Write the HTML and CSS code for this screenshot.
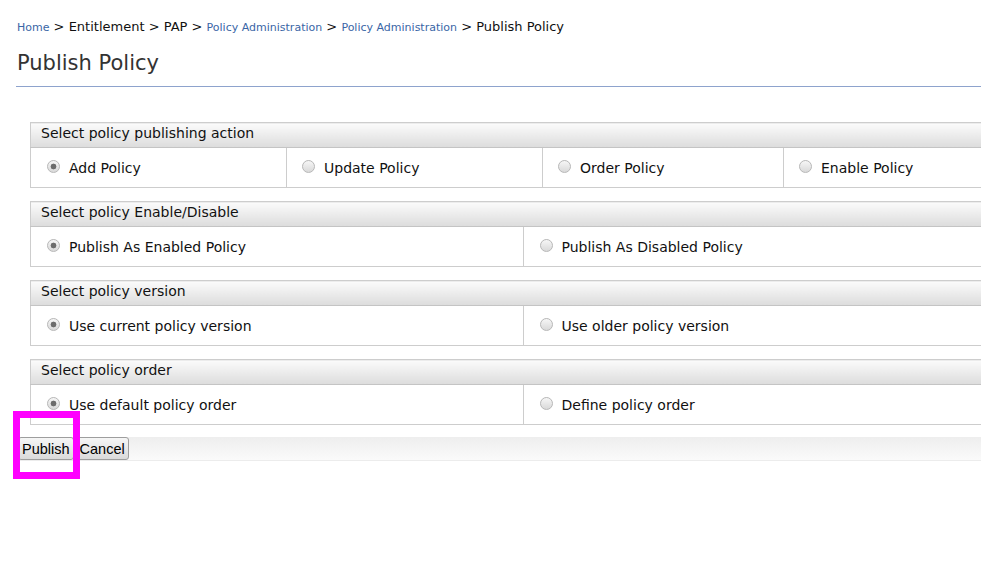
FILE: index.html
```html
<!DOCTYPE html>
<html>
<head>
<meta charset="utf-8">
<link rel="stylesheet" href="styles.css">
</head>
<body>
<div class="page">
  <div class="crumbs"><a class="lnk">Home</a> &gt; Entitlement &gt; PAP &gt; <a class="lnk">Policy Administration</a> &gt; <a class="lnk">Policy Administration</a> &gt; Publish Policy</div>
  <h2 class="title">Publish Policy</h2>
  <div class="content">
    <table class="opt four">
      <colgroup><col class="c1"><col class="c2"><col class="c3"><col class="c4"></colgroup>
      <tr><th colspan="4">Select policy publishing action</th></tr>
      <tr>
        <td class="first"><label><input type="radio" name="a" checked> Add Policy</label></td>
        <td><label><input type="radio" name="a"> Update Policy</label></td>
        <td><label><input type="radio" name="a"> Order Policy</label></td>
        <td><label><input type="radio" name="a"> Enable Policy</label></td>
      </tr>
    </table>
    <table class="opt two">
      <tr><th colspan="2">Select policy Enable/Disable</th></tr>
      <tr>
        <td class="first"><label><input type="radio" name="b" checked> Publish As Enabled Policy</label></td>
        <td class="second"><label><input type="radio" name="b"> Publish As Disabled Policy</label></td>
      </tr>
    </table>
    <table class="opt two">
      <tr><th colspan="2">Select policy version</th></tr>
      <tr>
        <td class="first"><label><input type="radio" name="c" checked> Use current policy version</label></td>
        <td class="second"><label><input type="radio" name="c"> Use older policy version</label></td>
      </tr>
    </table>
    <table class="opt two last">
      <tr><th colspan="2">Select policy order</th></tr>
      <tr>
        <td class="first"><label><input type="radio" name="d" checked> Use default policy order</label></td>
        <td class="second"><label><input type="radio" name="d"> Define policy order</label></td>
      </tr>
    </table>
  </div>
  <div class="buttons"><button class="btn">Publish</button><button class="btn">Cancel</button></div>
  <div class="highlight"></div>
</div>
</body>
</html>
```
FILE: styles.css
```css
html {
  overflow: hidden;
}
body {
  margin: 0;
  padding: 0;
  background: #fff;
  font-family: "DejaVu Sans", sans-serif;
  color: #111;
}
.page {
  position: relative;
  padding-left: 16px;
  width: 1100px;
  min-height: 540px;
}
.crumbs {
  padding: 19px 0 0 1px;
  font-size: 13px;
  line-height: 16px;
  color: #111;
}
.lnk {
  font-size: 11px;
  color: #3a66a6;
  text-decoration: none;
}
.title {
  margin: 0;
  padding: 15px 0 0 1px;
  font-size: 21px;
  font-weight: normal;
  line-height: 24px;
  color: #333;
  box-sizing: border-box;
  border-bottom: 1px solid #8ea3cd;
  height: 51px;
  width: 965px;
}
.content {
  padding: 35px 0 0 14px;
}
.opt {
  border-collapse: collapse;
  table-layout: fixed;
  border: 1px solid #cdcdcd;
  margin-bottom: 13px;
  font-size: 14px;
}
.opt.last { margin-bottom: 12px; }
.four { width: 986px; }
.two { width: 986px; }
.c1 { width: 256px; }
.c2 { width: 256px; }
.c3 { width: 241px; }
.c4 { width: 233px; }
.opt th {
  text-align: left;
  font-weight: normal;
  height: 25px;
  padding: 2px 0 0 10px;
  vertical-align: top;
  line-height: 17px;
  background: linear-gradient(#fbfbfb, #dcdcdc);
  border-bottom: 1px solid #c4c4c4;
  color: #111;
  box-sizing: border-box;
}
.opt td {
  height: 40px;
  box-sizing: border-box;
  padding: 0 0 0 15px;
  border-left: 1px solid #cdcdcd;
  color: #111;
}
.opt td.first { padding-left: 16px; }
.opt td.second { padding-left: 16px; }
.opt label {
  display: flex;
  align-items: center;
  gap: 9px;
  white-space: nowrap;
}
.opt input[type="radio"] {
  appearance: none;
  -webkit-appearance: none;
  margin: 0 0 2px 0;
  width: 13px;
  height: 13px;
  border-radius: 50%;
  border: 1px solid #b8b8b8;
  background: linear-gradient(#f6f6f6, #d9d9d9);
  box-sizing: border-box;
  flex: none;
}
.opt input[type="radio"]:checked {
  background: radial-gradient(circle, #6c6c6c 0, #6c6c6c 2.6px, transparent 3.2px), linear-gradient(#f6f6f6, #d9d9d9);
}
.buttons {
  display: flex;
  align-items: stretch;
  gap: 2px;
  height: 23px;
  padding-left: 2px;
  background: linear-gradient(#eeeeee, #fafafa);
  border-bottom: 1px solid #ececec;
}
.btn {
  font-family: "Liberation Sans", Arial, sans-serif;
  font-size: 14.5px;
  color: #000;
  padding: 0 3px;
  margin: 0;
  border: 1px solid #9e9e9e;
  border-radius: 3px;
  background: linear-gradient(#f6f6f6, #dadada);
  height: 23px;
  line-height: 20px;
}
.highlight {
  position: absolute;
  left: 13px;
  top: 411px;
  width: 67px;
  height: 68px;
  border: 7px solid #ff00ff;
  box-sizing: border-box;
}
```
